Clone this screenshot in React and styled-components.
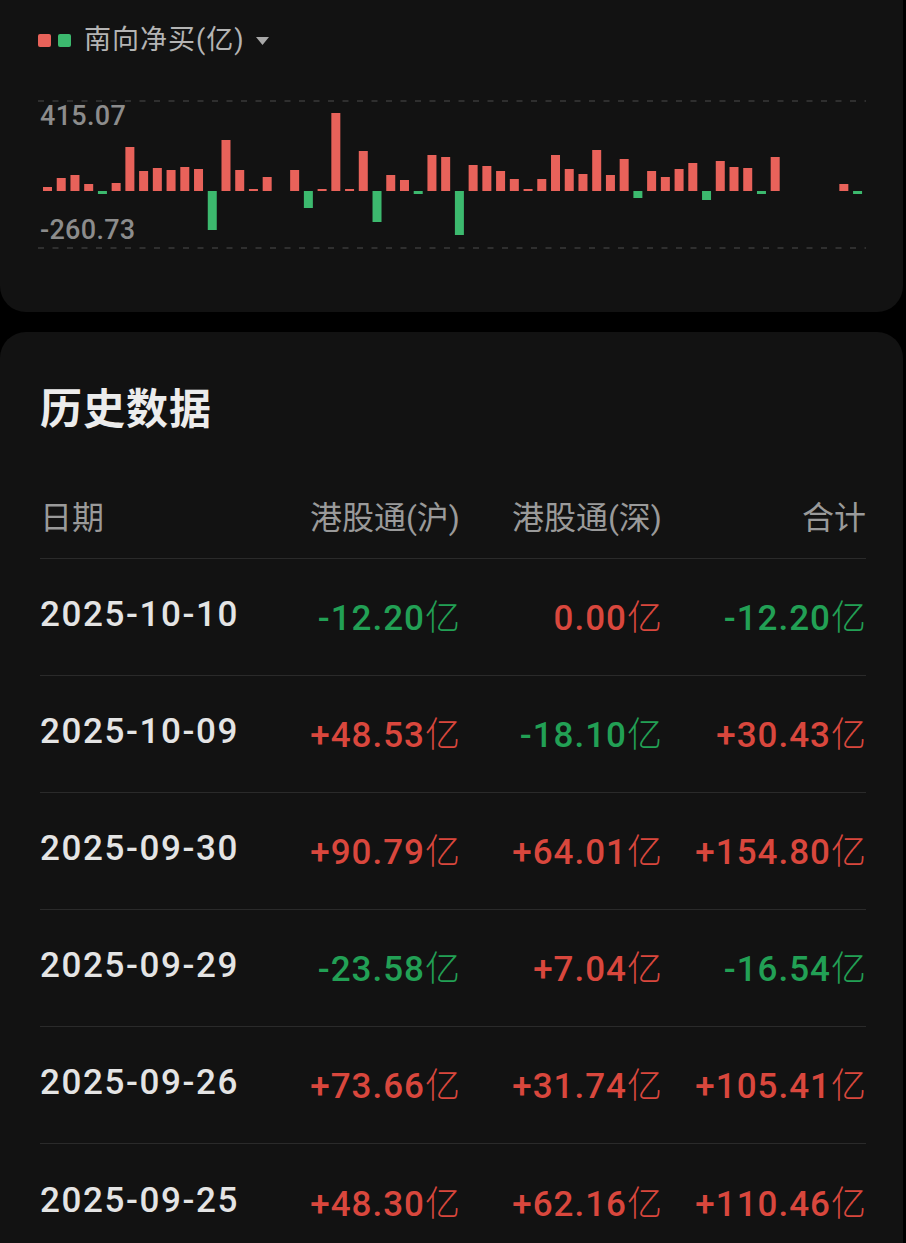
import React from "react";
import styled, { createGlobalStyle } from "styled-components";

const GlobalStyle = createGlobalStyle`
  html, body {
    margin: 0;
    padding: 0;
    background: #000;
  }
  body {
    font-family: Roboto, "Noto Sans CJK SC", sans-serif;
  }
`;

const RED = "#d9473d";
const GREEN = "#22a055";
const BAR_RED = "#e8625a";
const BAR_GREEN = "#3cb96e";

// bar heights in px, up is net buy, null = no data that day
const bars = [
  4, 13, 16, 7, -3, 8, 44, 20, 23, 21, 24, 22, -39, 51, 21, 2, 14, null, 21, -17,
  2, 78, 2, 40, -31, 16, 11, -3, 36, 34, -44, 26, 25, 20, 12, 2, 12, 36, 22, 17,
  41, 16, 32, -7, 20, 14, 22, 28, -9, 30, 24, 23, -3, 34, null, null, null, null, 7, -3,
];

const rows = [
  ["2025-10-10", "-12.20亿", "0.00亿", "-12.20亿"],
  ["2025-10-09", "+48.53亿", "-18.10亿", "+30.43亿"],
  ["2025-09-30", "+90.79亿", "+64.01亿", "+154.80亿"],
  ["2025-09-29", "-23.58亿", "+7.04亿", "-16.54亿"],
  ["2025-09-26", "+73.66亿", "+31.74亿", "+105.41亿"],
  ["2025-09-25", "+48.30亿", "+62.16亿", "+110.46亿"],
];

const Page = styled.div`
  width: 906px;
  height: 1243px;
  overflow: hidden;
  background: #000;
`;

const ChartCard = styled.section`
  width: 903px;
  height: 312px;
  box-sizing: border-box;
  padding: 25px 37px 0 38px;
  background: #121212;
  border-radius: 0 0 26px 26px;
`;

const Legend = styled.div`
  display: flex;
  align-items: center;
  height: 30px;
`;

const Swatch = styled.span`
  width: 13px;
  height: 13px;
  border-radius: 2px;
  background: ${(p) => p.$color};
  margin-right: ${(p) => p.$gap}px;
`;

const LegendText = styled.span`
  font-size: 27px;
  line-height: 30px;
  color: #b4b4b4;
  letter-spacing: 1px;
`;

const Caret = styled.svg`
  margin-left: 11px;
  margin-top: 2px;
`;

const ChartArea = styled.div`
  position: relative;
  margin-top: 45px;
  width: 828px;
  height: 150px;
`;

const AxisLabel = styled.span`
  position: absolute;
  left: 2px;
  top: ${(p) => p.$top}px;
  font-size: 27px;
  line-height: 26px;
  font-weight: 500;
  letter-spacing: 0.3px;
  color: #8c8c8c;
`;

const TableCard = styled.section`
  width: 903px;
  height: 911px;
  margin-top: 20px;
  box-sizing: border-box;
  padding: 56px 37px 0 40px;
  background: #121212;
  border-radius: 26px 26px 0 0;
`;

const Title = styled.h2`
  margin: 0;
  font-size: 42px;
  line-height: 44px;
  font-weight: 700;
  color: #ececec;
  letter-spacing: 1px;
`;

const Row = styled.div`
  display: grid;
  grid-template-columns: 220px 200px 202px 204px;
  align-items: center;
  box-sizing: border-box;
  height: ${(p) => p.$height}px;
  padding-bottom: ${(p) => p.$pad}px;
  margin-top: ${(p) => p.$top || 0}px;
  border-bottom: 1px solid #2a2a2a;
  &:last-child {
    border-bottom: none;
  }
`;

const HeadCell = styled.div`
  font-size: 32px;
  color: #9a9a9a;
  text-align: ${(p) => (p.$left ? "left" : "right")};
  white-space: nowrap;
`;

const DateCell = styled.div`
  font-size: 35px;
  font-weight: 500;
  letter-spacing: 1.6px;
  color: #e4e4e4;
`;

const Value = styled.div`
  font-size: 35px;
  font-weight: 500;
  letter-spacing: 1px;
  text-align: right;
  white-space: nowrap;
  color: ${(p) => (p.$down ? GREEN : RED)};
`;

const Unit = styled.span`
  font-weight: 300;
  letter-spacing: 0;
`;

const BarChart = () => (
  <svg width="828" height="150" viewBox="0 0 828 150">
    <line x1="0" y1="1" x2="828" y2="1" stroke="#3a3a3a" strokeWidth="1.5" strokeDasharray="6 8.5" />
    <line x1="0" y1="148" x2="828" y2="148" stroke="#3a3a3a" strokeWidth="1.5" strokeDasharray="6 8.5" />
    {bars.map((h, i) => {
      if (h === null) return null;
      const x = 5 + i * 13.73;
      return h >= 0 ? (
        <rect key={i} x={x} y={91 - h} width="9" height={Math.max(h, 2)} fill={BAR_RED} />
      ) : (
        <rect key={i} x={x} y="91" width="9" height={-h} fill={BAR_GREEN} />
      );
    })}
  </svg>
);

const Amount = ({ text }) => (
  <Value $down={text.startsWith("-")}>
    {text.slice(0, -1)}
    <Unit>亿</Unit>
  </Value>
);

export default function App() {
  return (
    <Page>
      <GlobalStyle />
      <ChartCard>
        <Legend>
          <Swatch $color={BAR_RED} $gap={7} />
          <Swatch $color={BAR_GREEN} $gap={13} />
          <LegendText>南向净买(亿)</LegendText>
          <Caret width="13" height="8" viewBox="0 0 13 8">
            <polygon points="0,0 13,0 6.5,8" fill="#a8a8a8" />
          </Caret>
        </Legend>
        <ChartArea>
          <BarChart />
          <AxisLabel $top={3}>415.07</AxisLabel>
          <AxisLabel $top={117}>-260.73</AxisLabel>
        </ChartArea>
      </ChartCard>

      <TableCard>
        <Title>历史数据</Title>
        <div>
          <Row $height={87} $pad={1} $top={40}>
            <HeadCell $left>日期</HeadCell>
            <HeadCell>港股通(沪)</HeadCell>
            <HeadCell>港股通(深)</HeadCell>
            <HeadCell>合计</HeadCell>
          </Row>
          {rows.map((r) => (
            <Row key={r[0]} $height={117} $pad={5}>
              <DateCell>{r[0]}</DateCell>
              <Amount text={r[1]} />
              <Amount text={r[2]} />
              <Amount text={r[3]} />
            </Row>
          ))}
        </div>
      </TableCard>
    </Page>
  );
}
